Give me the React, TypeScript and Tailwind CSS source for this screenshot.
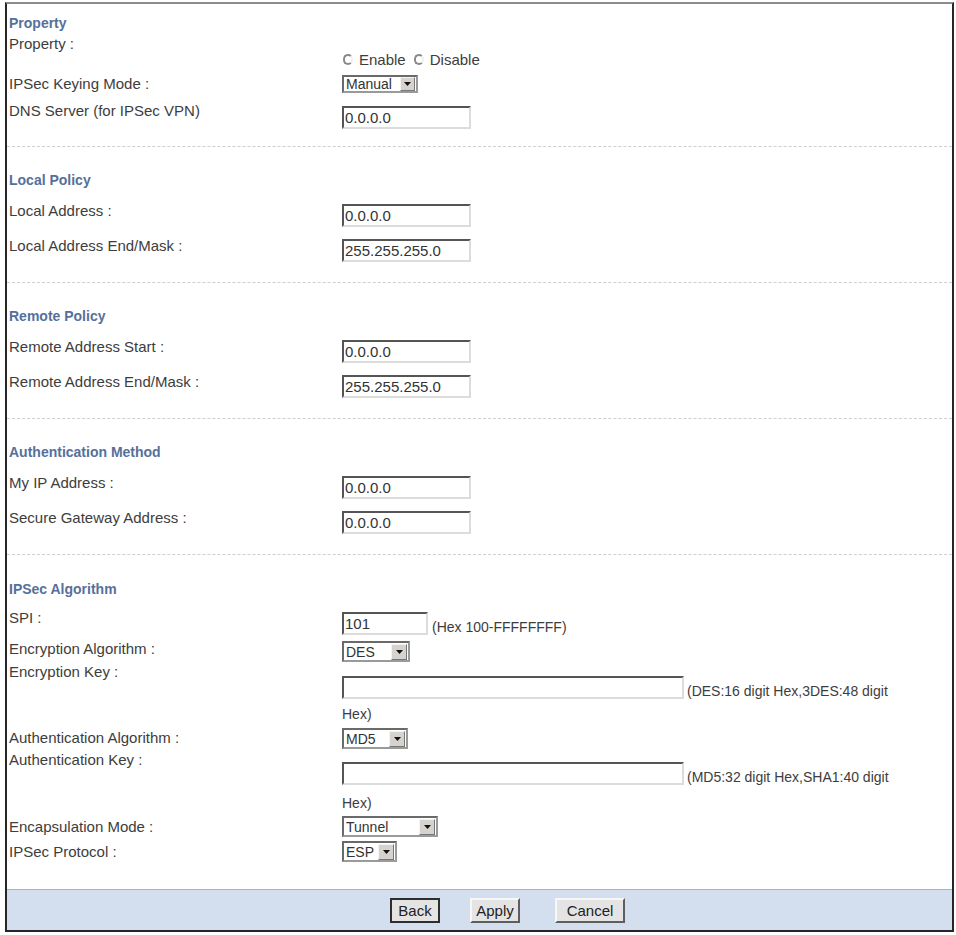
import type { ReactNode } from 'react'

const font = "font-['Liberation_Sans',Arial,sans-serif]"

function Arrow({ size }: { size: string }) {
  return (
    <span
      className={`flex items-center justify-center bg-[#d6d3ce] border border-t-[#f4f4f4] border-l-[#f4f4f4] border-r-[#777] border-b-[#777] ${size}`}
    >
      <svg width="7" height="4" viewBox="0 0 7 4">
        <path d="M0 0 H7 L3.5 4 Z" fill="#111" />
      </svg>
    </span>
  )
}

function Drop({ text, box, arrow }: { text: string; box: string; arrow: string }) {
  return (
    <div
      className={`flex items-center justify-between bg-white border-2 border-t-[#6a6a6a] border-l-[#6a6a6a] border-r-[#9a9a9a] border-b-[#9a9a9a] pl-[2px] pr-[1px] text-[14px] leading-none text-[#333] ${box}`}
    >
      <span>{text}</span>
      <Arrow size={arrow} />
    </div>
  )
}

function Field({ value = '', w, mt }: { value?: string; w: string; mt: string }) {
  return (
    <input
      readOnly
      value={value}
      className={`block h-[23px] ${w} ${mt} bg-white border-2 border-t-[#555] border-l-[#555] border-r-[#dcdcdc] border-b-[#dcdcdc] pl-[1px] text-[15px] text-[#333] outline-none ${font}`}
    />
  )
}

function Row({ h, lpt, label, children }: { h: string; lpt: string; label: string; children?: ReactNode }) {
  return (
    <div className={`flex ${h}`}>
      <div className={`w-[335px] shrink-0 pl-[2px] text-[15px] leading-[15px] text-[#3d3d3d] ${lpt}`}>{label}</div>
      <div className="flex-1">{children}</div>
    </div>
  )
}

function Header({ title, h, pt }: { title: string; h: string; pt: string }) {
  return (
    <div className={`${h} ${pt} pl-[2px] text-[14px] leading-[14px] font-bold text-[#56709b]`}>{title}</div>
  )
}

function Radio({ label }: { label: string }) {
  return (
    <span className="flex items-center gap-[6px]">
      <span className="w-[10px] h-[11px] rounded-full border-2 border-[#8a8a8a] border-r-[#f0f0f0]" />
      <span>{label}</span>
    </span>
  )
}

function AddressSection({ title, a, b }: { title: string; a: [string, string]; b: [string, string] }) {
  return (
    <div className="h-[136px] border-b border-dashed border-[#cfcfcf]">
      <Header title={title} h="h-[56px]" pt="pt-[26px]" />
      <Row h="h-[35px]" lpt="pt-0" label={a[0]}>
        <Field value={a[1]} w="w-[129px]" mt="mt-[1px]" />
      </Row>
      <Row h="h-[35px]" lpt="pt-0" label={b[0]}>
        <Field value={b[1]} w="w-[129px]" mt="mt-[1px]" />
      </Row>
    </div>
  )
}

function Btn({ label, w, focused }: { label: string; w: string; focused?: boolean }) {
  const edge = focused
    ? 'border-2 border-[#2e2e2e]'
    : 'border-2 border-t-[#f7f7f7] border-l-[#f7f7f7] border-r-[#5e5e5e] border-b-[#5e5e5e]'
  return (
    <button className={`h-[25px] ${w} ${edge} bg-[#e4e4e4] text-[15px] leading-none text-[#222] ${font}`}>
      {label}
    </button>
  )
}

export default function App() {
  return (
    <div className={`min-h-[935px] bg-white pt-[2px] pl-[5px] ${font}`}>
      <div className="w-[949px] h-[930px] border-2 border-t-[#8c8c8c] border-l-[#262626] border-r-[#262626] border-b-[#262626] flex flex-col">
        {/* Property */}
        <div className="h-[143px] border-b border-dashed border-[#cfcfcf]">
          <Header title="Property" h="h-[30px]" pt="pt-[12px]" />
          <Row h="h-[36px]" lpt="pt-[2px]" label="Property :">
            <div className="pt-[18px] flex items-center gap-[8px] text-[15px] leading-[15px] text-[#3d3d3d] pl-[1px]">
              <Radio label="Enable" />
              <Radio label="Disable" />
            </div>
          </Row>
          <Row h="h-[28px]" lpt="pt-[6px]" label="IPSec Keying Mode :">
            <div className="pt-[5px]">
              <Drop text="Manual" box="w-[76px] h-[18px]" arrow="w-[15px] h-[14px]" />
            </div>
          </Row>
          <Row h="h-[48px]" lpt="pt-[5px]" label="DNS Server (for IPSec VPN)">
            <Field value="0.0.0.0" w="w-[129px]" mt="mt-[8px]" />
          </Row>
        </div>

        <AddressSection
          title="Local Policy"
          a={['Local Address :', '0.0.0.0']}
          b={['Local Address End/Mask :', '255.255.255.0']}
        />
        <AddressSection
          title="Remote Policy"
          a={['Remote Address Start :', '0.0.0.0']}
          b={['Remote Address End/Mask :', '255.255.255.0']}
        />
        <AddressSection
          title="Authentication Method"
          a={['My IP Address :', '0.0.0.0']}
          b={['Secure Gateway Address :', '0.0.0.0']}
        />

        {/* IPSec Algorithm */}
        <div className="flex-1">
          <Header title="IPSec Algorithm" h="h-[55px]" pt="pt-[27px]" />
          <Row h="h-[30px]" lpt="pt-0" label="SPI :">
            <div className="flex items-end mt-[2px] gap-[4px] text-[14px] leading-[15px] text-[#3d3d3d]">
              <Field value="101" w="w-[86px]" mt="mt-0" />
              <span>(Hex 100-FFFFFFFF)</span>
            </div>
          </Row>
          <Row h="h-[24px]" lpt="pt-[1px]" label="Encryption Algorithm :">
            <div className="pt-[1px]">
              <Drop text="DES" box="w-[68px] h-[21px]" arrow="w-[16px] h-[16px]" />
            </div>
          </Row>
          <Row h="h-[62px]" lpt="pt-0" label="Encryption Key :">
            <div className="flex items-end mt-[12px] gap-[3px] text-[14px] leading-[15px] text-[#3d3d3d]">
              <Field w="w-[342px]" mt="mt-0" />
              <span>(DES:16 digit Hex,3DES:48 digit</span>
            </div>
            <div className="mt-[8px] text-[14px] leading-[15px] text-[#3d3d3d]">Hex)</div>
          </Row>
          <Row h="h-[24px]" lpt="pt-[4px]" label="Authentication Algorithm :">
            <div className="pt-[2px]">
              <Drop text="MD5" box="w-[66px] h-[21px]" arrow="w-[16px] h-[16px]" />
            </div>
          </Row>
          <Row h="h-[64px]" lpt="pt-[2px]" label="Authentication Key :">
            <div className="flex items-end mt-[12px] gap-[3px] text-[14px] leading-[15px] text-[#3d3d3d]">
              <Field w="w-[342px]" mt="mt-0" />
              <span>(MD5:32 digit Hex,SHA1:40 digit</span>
            </div>
            <div className="mt-[11px] text-[14px] leading-[15px] text-[#3d3d3d]">Hex)</div>
          </Row>
          <Row h="h-[24px]" lpt="pt-[5px]" label="Encapsulation Mode :">
            <div className="pt-[2px]">
              <Drop text="Tunnel" box="w-[96px] h-[21px]" arrow="w-[16px] h-[16px]" />
            </div>
          </Row>
          <Row h="h-[25px]" lpt="pt-[6px]" label="IPSec Protocol :">
            <div className="pt-[3px]">
              <Drop text="ESP" box="w-[55px] h-[21px]" arrow="w-[16px] h-[16px]" />
            </div>
          </Row>
        </div>

        <div className="h-[41px] shrink-0 border-t border-[#a9b4c2] bg-[#d3dfee] flex items-center pl-[383px]">
          <Btn label="Back" w="w-[50px]" focused />
          <div className="ml-[30px]">
            <Btn label="Apply" w="w-[50px]" />
          </div>
          <div className="ml-[35px]">
            <Btn label="Cancel" w="w-[70px]" />
          </div>
        </div>
      </div>
    </div>
  )
}
